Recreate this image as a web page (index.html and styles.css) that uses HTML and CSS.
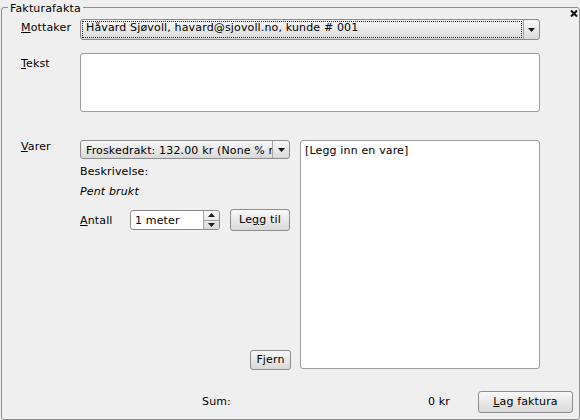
FILE: index.html
```html
<!DOCTYPE html>
<html>
<head>
<meta charset="utf-8">
<link rel="stylesheet" href="styles.css">
</head>
<body>
<div class="frame">
  <span class="legend">Fakturafakta</span>
  <span class="close"><svg width="8" height="7" viewBox="0 0 8 7"><path d="M1 0.5L7 6.5M7 0.5L1 6.5" stroke="#111" stroke-width="2"/></svg></span>

  <div class="row r1">
    <label class="lbl l1"><u>M</u>ottaker</label>
    <div class="combo combo-main">
      <div class="combo-text focus">Håvard Sjøvoll, havard@sjovoll.no, kunde # 001</div>
      <div class="combo-arrow"><svg width="7" height="4" viewBox="0 0 7 4"><path d="M0 0H7L3.5 4Z" fill="#1a1a1a"/></svg></div>
    </div>
  </div>

  <div class="row r2">
    <label class="lbl l2"><u>T</u>ekst</label>
    <div class="textbox"></div>
  </div>

  <div class="row r3">
    <label class="lbl l3"><u>V</u>arer</label>
    <div class="col-left">
      <div class="combo combo-varer">
        <div class="combo-text">Froskedrakt: 132.00 kr (None % r</div>
        <div class="combo-arrow"><svg width="7" height="4" viewBox="0 0 7 4"><path d="M0 0H7L3.5 4Z" fill="#1a1a1a"/></svg></div>
      </div>
      <div class="desc-label">Beskrivelse:</div>
      <div class="desc">Pent brukt</div>
      <div class="antall-row">
        <label class="lbl antall"><u>A</u>ntall</label>
        <div class="spin">
          <div class="spin-text">1 meter</div>
          <div class="spin-btns">
            <span><svg width="7" height="4" viewBox="0 0 7 4"><path d="M0 4H7L3.5 0Z" fill="#1a1a1a"/></svg></span>
            <span><svg width="7" height="4" viewBox="0 0 7 4"><path d="M0 0H7L3.5 4Z" fill="#1a1a1a"/></svg></span>
          </div>
        </div>
        <div class="btn legg">Le<u>g</u>g til</div>
      </div>
      <div class="btn fjern">F<u>j</u>ern</div>
    </div>
    <div class="list"><div class="list-item">[Legg inn en vare]</div></div>
  </div>

  <div class="row r4">
    <span class="sum">Sum:</span>
    <span class="total">0 kr</span>
    <div class="btn lag"><u>L</u>ag faktura</div>
  </div>
</div>
</body>
</html>
```

FILE: styles.css
```css
* { box-sizing: border-box; }
html, body { margin: 0; padding: 0; }
body {
  background: #efefef;
  font-family: "DejaVu Sans", sans-serif;
  font-size: 11px;
  line-height: 13px;
  letter-spacing: 0.15px;
  color: #000;
  width: 580px;
  height: 420px;
  overflow: hidden;
}
u { text-decoration-thickness: 1px; text-underline-offset: 1px; }

.frame {
  position: relative;
  margin: 7px 0 0 1px;
  width: 579px;
  height: 413px;
  border: 1px solid #8d8d8d;
  border-radius: 3px;
  padding: 11px 5px 0 19px;
}
.legend {
  position: absolute;
  left: 6px;
  top: -6px;
  padding: 0 2px;
  background: #efefef;
  line-height: 13px;
}
.close {
  position: absolute;
  left: 568px;
  top: 2px;
  width: 8px;
  height: 7px;
  display: block;
}
.close svg { display: block; }

.row { display: flex; align-items: flex-start; }
.r1 { height: 21px; }
.r2 { margin-top: 13px; }
.r3 { margin-top: 28px; }
.r4 { margin-top: 21px; }

.lbl { width: 59px; flex-shrink: 0; }
.l1 { margin-top: 2px; }
.l2 { margin-top: 4px; }
.l3 { margin-top: 0; }

.combo {
  display: flex;
  border: 1px solid #8c8c8c;
  border-radius: 3px;
  background: linear-gradient(#f8f8f8, #d9d9d9);
}
.combo-text {
  flex: 1;
  white-space: nowrap;
  overflow: hidden;
}
.combo-arrow {
  border-left: 1px solid #a4a4a4;
  display: flex;
  align-items: center;
  justify-content: center;
  flex-shrink: 0;
}
.combo-arrow svg, .spin-btns svg { display: block; }

.combo-main { width: 460px; height: 21px; }
.combo-main .focus {
  margin: 1px;
  border: 1px dotted #222;
  line-height: 11px;
  padding-left: 3px;
}
.combo-main .combo-arrow { width: 16px; }

.combo-varer { width: 210px; height: 19px; }
.combo-varer .combo-text { padding: 3px 0 0 5px; }
.combo-varer .combo-arrow { width: 17px; }

.textbox {
  width: 460px;
  height: 59px;
  background: #fff;
  border: 1px solid #9c9c9c;
  border-radius: 3px;
}

.col-left {
  width: 211px;
  height: 230px;
  display: flex;
  flex-direction: column;
  align-items: flex-start;
  flex-shrink: 0;
}
.desc-label { margin-top: 6px; }
.desc { margin-top: 7px; font-style: italic; }
.antall-row { display: flex; align-items: flex-start; margin-top: 11px; }
.antall { width: 50px; margin-top: 5px; }

.spin {
  width: 90px;
  height: 20px;
  margin-top: 1px;
  border: 1px solid #8c8c8c;
  border-radius: 3px;
  background: #fff;
  display: flex;
}
.spin-text { flex: 1; padding: 3px 0 0 4px; }
.spin-btns {
  width: 16px;
  border-left: 1px solid #a4a4a4;
  display: flex;
  flex-direction: column;
  background: linear-gradient(#f8f8f8, #d9d9d9);
  border-radius: 0 2px 2px 0;
}
.spin-btns span {
  flex: 1;
  display: flex;
  align-items: center;
  justify-content: center;
}
.spin-btns span + span { border-top: 1px solid #a4a4a4; }

.btn {
  border: 1px solid #8c8c8c;
  border-radius: 3px;
  background: linear-gradient(#f8f8f8, #d9d9d9);
  text-align: center;
  flex-shrink: 0;
}
.legg { width: 60px; height: 22px; line-height: 20px; margin-left: 10px; }
.fjern { margin-top: auto; align-self: flex-end; width: 41px; height: 20px; line-height: 18px; }

.list {
  width: 240px;
  height: 229px;
  margin-left: 9px;
  background: #fff;
  border: 1px solid #9c9c9c;
  border-radius: 3px;
  padding: 3px 4px;
}

.sum { margin-left: 181px; width: 226px; margin-top: 4px; flex-shrink: 0; }
.total { width: 50px; margin-top: 4px; flex-shrink: 0; }
.lag { width: 95px; height: 22px; line-height: 20px; }
```
